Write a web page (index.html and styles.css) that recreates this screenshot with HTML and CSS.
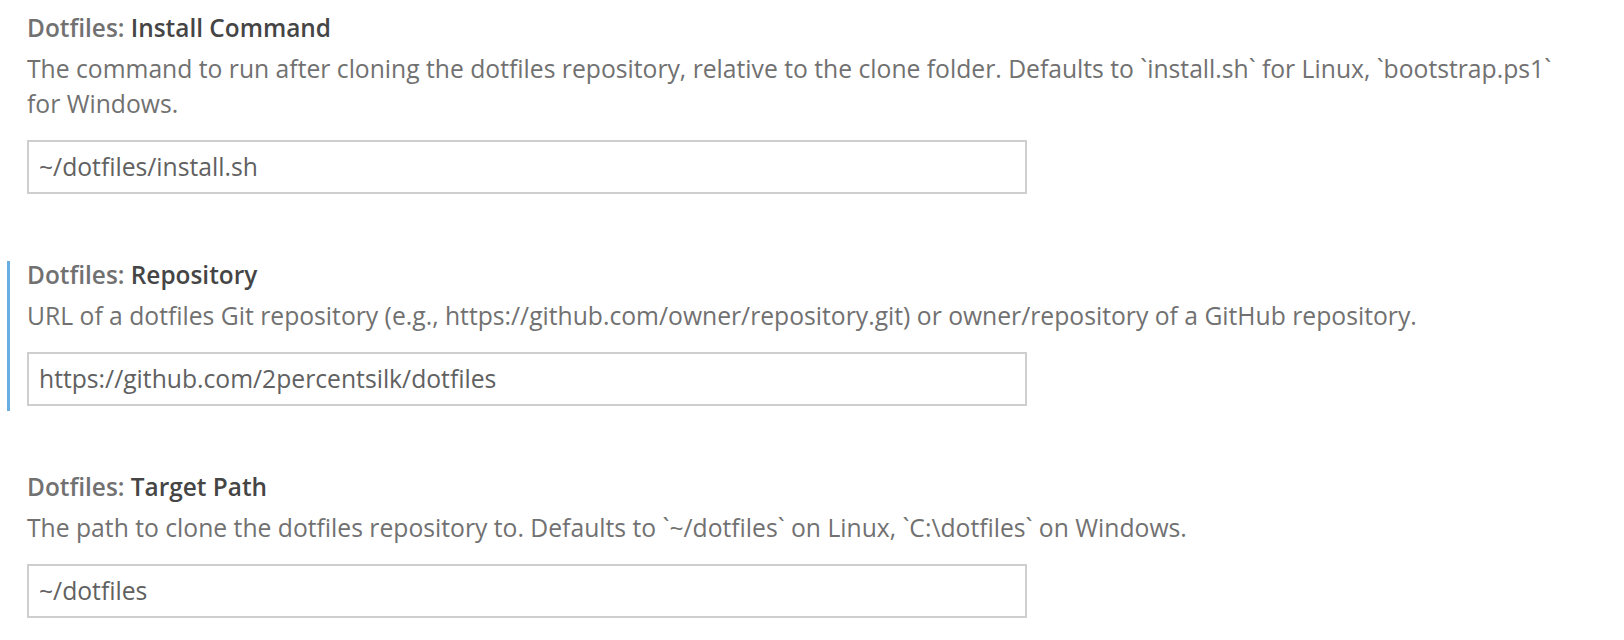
FILE: index.html
```html
<!DOCTYPE html>
<html lang="en">
<head>
<meta charset="utf-8">
<title>Dotfiles settings</title>
<link rel="stylesheet" href="styles.css">
</head>
<body>
<div class="settings-list">
  <div class="setting-item">
    <div class="setting-title"><span class="category">Dotfiles: </span><span class="label">Install Command</span></div>
    <div class="setting-desc">The command to run after cloning the dotfiles repository, relative to the clone folder. Defaults to `install.sh` for Linux, `bootstrap.ps1` for Windows.</div>
    <div class="setting-input">~/dotfiles/install.sh</div>
  </div>
  <div class="setting-item modified">
    <div class="setting-title"><span class="category">Dotfiles: </span><span class="label">Repository</span></div>
    <div class="setting-desc">URL of a dotfiles Git repository (e.g., https://github.com/owner/repository.git) or owner/repository of a GitHub repository.</div>
    <div class="setting-input">https://github.com/2percentsilk/dotfiles</div>
  </div>
  <div class="setting-item">
    <div class="setting-title"><span class="category">Dotfiles: </span><span class="label">Target Path</span></div>
    <div class="setting-desc">The path to clone the dotfiles repository to. Defaults to `~/dotfiles` on Linux, `C:\dotfiles` on Windows.</div>
    <div class="setting-input">~/dotfiles</div>
  </div>
</div>
</body>
</html>
```
FILE: styles.css
```css
html, body {
  margin: 0;
  padding: 0;
  background: #ffffff;
}

body {
  font-family: "Open Sans", "Noto Sans", sans-serif;
  font-size: 24.7px;
}

.settings-list {
  display: flex;
  flex-direction: column;
  gap: 62px;
  padding-top: 14px;
  width: 1560px;
}

.setting-item {
  margin-left: 7px;
  border-left: 3px solid transparent;
  padding: 0 0 5px 17px;
}

.setting-item.modified {
  border-left-color: #66afe0;
}

.setting-title {
  line-height: 27px;
  font-weight: 600;
  font-size: 24.4px;
}

.category {
  color: #717171;
}

.label {
  color: #454545;
}

.setting-desc {
  margin-top: 10px;
  line-height: 35px;
  color: #717171;
}

.setting-input {
  margin-top: 19px;
  box-sizing: border-box;
  width: 1000px;
  height: 54px;
  border: 2px solid #cecece;
  padding: 0 10px;
  line-height: 50px;
  color: #616161;
}
```
